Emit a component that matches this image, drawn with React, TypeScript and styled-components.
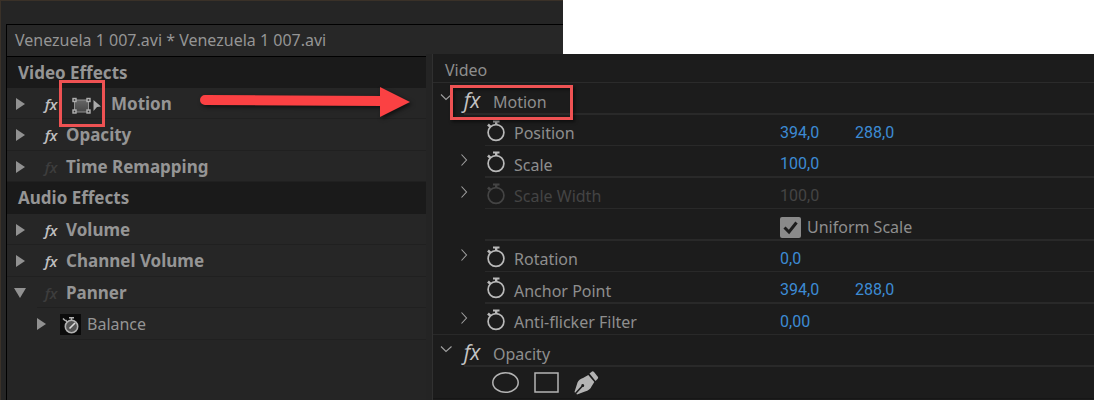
import React from "react";
import styled, { createGlobalStyle } from "styled-components";

const GlobalStyle = createGlobalStyle`
  *, *::before, *::after { box-sizing: border-box; }
  body {
    margin: 0;
    background: #fff;
    font-family: "Noto Sans", "Open Sans", sans-serif;
    font-size: 16px;
    line-height: 24px;
  }
  button, input {
    margin: 0;
    padding: 0;
    border: 0;
    background: none;
    color: inherit;
    font: inherit;
  }
  h2, p { margin: 0; font: inherit; }
  svg { display: block; }
`;

const Stage = styled.main`
  position: relative;
  display: grid;
  grid-template-columns: 433px 130px minmax(0, 1fr);
  grid-template-rows: 54px 1fr;
  min-height: 100vh;
`;

/* Classic panel */

const ClassicWindow = styled.section`
  grid-column: 1 / 3;
  grid-row: 1 / 3;
  padding: 23px 0 0 5px;
  background: #252525;
  border-top: 1px solid #3a3128;
  border-left: 1px solid #3a3128;
`;

const ClassicPanel = styled.div`
  min-height: 100%;
  border-top: 1px solid #000;
  border-left: 1px solid #000;
  color: #959595;
`;

const ClipTitle = styled.p`
  height: 31px;
  padding: 3px 8px 0;
  background: #272727;
`;

const EffectList = styled.div`
  width: 419px;
  border-top: 1px solid #000;
`;

const ClassicHeader = styled.h2<{ $tall?: boolean }>`
  display: flex;
  align-items: center;
  height: ${(p) => (p.$tall ? 32 : 31)}px;
  padding-left: 11px;
  background: #1a1a1a;
  font-weight: 700;
  font-size: 17px;
`;

const ClassicRow = styled.div<{ $tall?: boolean; $nested?: boolean; $line?: number }>`
  display: flex;
  align-items: center;
  height: ${(p) => (p.$tall ? 32 : 31)}px;
  padding-left: ${(p) => (p.$nested ? 28 : 7)}px;
  font-weight: ${(p) => (p.$nested ? 400 : 700)};
  font-size: ${(p) => (p.$nested ? 16 : 17)}px;
  background: linear-gradient(#202020, #202020) ${(p) => p.$line ?? 0}px 100% / 100% 1px no-repeat #262626;
`;

const TriangleButton = styled.button`
  display: grid;
  place-items: center;
  width: 12px;
  height: 20px;
`;

const ClassicFx = styled.button<{ $off?: boolean }>`
  width: 18px;
  margin: 0 6px 0 16px;
  color: ${(p) => (p.$off ? "#3d3d3d" : "#c0c0c0")};
  font: italic 600 15px/20px "Open Sans", sans-serif;
  text-align: center;
`;

const TransformButton = styled.button`
  position: relative;
  width: 30px;
  height: 22px;
  margin: 0 9px 0 6px;
  padding-top: 4px;
`;

const ClassicWatch = styled.button`
  width: 21px;
  height: 21px;
  margin: 0 6px 0 13px;
  background: #0b0b0b;
`;

/* Current panel */

const ModernPanel = styled.section`
  grid-column: 2 / 4;
  grid-row: 2;
  margin-left: -7px;
  border-left: 6px solid #242424;
  background: #1c1c1c;
  color: #8e8e8e;
`;

const ModernBody = styled.div`
  min-height: 100%;
  border-left: 1px solid #303030;
`;

const ModernHeader = styled.h2`
  height: 29px;
  padding: 4px 12px 0;
  border-bottom: 1px solid #2b2b2b;
`;

const Row = styled.div<{ $tall?: boolean; $line?: number }>`
  display: grid;
  grid-template-columns: 347px minmax(0, 1fr);
  height: ${(p) => (p.$tall ? 32 : 31)}px;
  background: linear-gradient(#292929, #292929) ${(p) => p.$line ?? 0}px 100% / 100% ${(p) => (p.$tall ? 2 : 1)}px no-repeat;
`;

const NameCell = styled.div<{ $nested?: boolean; $muted?: boolean }>`
  display: flex;
  align-items: center;
  padding: 2px 0 0 ${(p) => (p.$nested ? 25 : 6)}px;
  color: ${(p) => (p.$muted ? "#444" : "inherit")};
`;

const ValueCell = styled.div`
  display: flex;
  align-items: center;
  padding-top: 4px;
`;

const Chevron = styled.button`
  width: 14px;
  height: 20px;
  padding-bottom: 6px;
`;

const ChevronGap = styled.span`
  width: 14px;
`;

const FxButton = styled.button`
  width: 22px;
  margin: 0 10px 0 8px;
  color: #c4c4c4;
  font: italic 400 21px/24px "Open Sans", sans-serif;
  text-align: center;
`;

const WatchButton = styled.button<{ $muted?: boolean }>`
  width: 20px;
  height: 24px;
  margin: 0 8px 0 14px;
  padding-bottom: 4px;
  color: ${(p) => (p.$muted ? "#444" : "#b9b9b9")};
`;

const Name = styled.span`
  padding-top: 3px;
`;

const ValueInput = styled.input`
  width: 75px;
  height: 22px;
  color: #3d8bd4;
  font-family: Roboto, "Noto Sans", sans-serif;
  &:disabled { color: #444; }
`;

const CheckLabel = styled.label`
  display: flex;
  align-items: center;
  gap: 6px;
`;

const CheckStack = styled.span`
  display: grid;
  > * { grid-area: 1 / 1; }
  svg { pointer-events: none; }
`;

const CheckInput = styled.input`
  appearance: none;
  width: 21px;
  height: 21px;
  border-radius: 2px;
  background: #8a8a8a;
`;

const MaskTools = styled.div`
  display: flex;
  align-items: center;
  gap: 14px;
  height: 32px;
  padding-left: 59px;
  border-bottom: 1px solid #161616;
  color: #b4b4b4;
`;

const MaskButton = styled.button`
  width: 27px;
  height: 26px;
`;

/* Annotations drawn over the panels */

const IconMarker = styled.span`
  position: absolute;
  left: -13px;
  top: -13px;
  width: 46px;
  height: 47px;
  border: 3px solid #ee5253;
  pointer-events: none;
`;

const HeadingMarker = styled.span`
  position: absolute;
  left: 450px;
  top: 85px;
  width: 123px;
  height: 35px;
  border: 3px solid #ee5253;
  box-shadow: 2px 2px 3px rgba(0, 0, 0, 0.5), inset 2px 2px 3px rgba(0, 0, 0, 0.4);
  pointer-events: none;
`;

const Arrow = styled.svg`
  position: absolute;
  left: 196px;
  top: 82px;
  pointer-events: none;
  filter: drop-shadow(2px 2px 2px rgba(0, 0, 0, 0.6));
`;

function Triangle({ label, open }: { label: string; open?: boolean }) {
  return (
    <TriangleButton type="button" aria-label={`Toggle ${label}`} aria-expanded={!!open}>
      <svg width="12" height="12" fill="#919191">
        <path d={open ? "M0 1H12L6 11Z" : "M2 0L11 6L2 12Z"} />
      </svg>
    </TriangleButton>
  );
}

function TransformIcon() {
  return (
    <svg width="30" height="18" viewBox="0 0 30 18">
      <defs>
        <linearGradient id="box" x1="0" y1="0" x2="0" y2="1">
          <stop offset="0" stopColor="#666" />
          <stop offset="1" stopColor="#484848" />
        </linearGradient>
      </defs>
      <rect x="2.500" y="3" width="14" height="12" fill="url(#box)" stroke="#929292" />
      <g fill="#333" stroke="#b0b0b0" strokeWidth="1.400">
        <rect x="1" y="1.500" width="3" height="3" />
        <rect x="15" y="1.500" width="3" height="3" />
        <rect x="1" y="13" width="3" height="3" />
        <rect x="15" y="13" width="3" height="3" />
      </g>
      <path d="M21.500 3L29 9.500L25 10L21.500 14Z" fill="#aaa" />
    </svg>
  );
}

function ClassicWatchIcon() {
  return (
    <svg width="21" height="21" viewBox="0 0 21 21" fill="none" stroke="#b2b2b2">
      <circle cx="11.500" cy="12.500" r="6.200" fill="#555" strokeWidth="1.600" />
      <path d="M9 3.700H14M11.500 4V6M3 4.500L5 6.500M5.500 6L7 8" strokeWidth="1.500" />
      <path d="M9.500 14.500L15 9" stroke="#ddd" strokeWidth="1.600" />
    </svg>
  );
}

function WatchIcon() {
  return (
    <svg width="20" height="22" viewBox="0 0 20 22" fill="none" stroke="currentColor">
      <circle cx="10" cy="12.500" r="7.900" strokeWidth="1.700" />
      <path d="M7 1.500H13.500" strokeWidth="2" />
      <path d="M10.200 1.500V5" strokeWidth="2.400" />
      <path d="M2 4.500L4.200 6.700" strokeWidth="2.600" />
    </svg>
  );
}

function ChevronButton({ label, open }: { label: string; open?: boolean }) {
  return (
    <Chevron type="button" aria-label={`Toggle ${label}`} aria-expanded={!!open}>
      <svg width="14" height="14" fill="none" stroke="#a0a0a0" strokeWidth="1.100">
        <path d={open ? "M2 4.500L7 9.500L12.500 4.500" : "M3.500 1.500L8.500 7L3.500 12.500"} />
      </svg>
    </Chevron>
  );
}

function ClassicEffect({ label, tall, off, open, transform, line }: {
  label: string; tall?: boolean; off?: boolean; open?: boolean; transform?: boolean; line?: number;
}) {
  return (
    <ClassicRow $tall={tall} $line={line}>
      <Triangle label={label} open={open} />
      <ClassicFx type="button" $off={off} aria-label={`Enable ${label}`}>fx</ClassicFx>
      {transform && (
        <TransformButton type="button" aria-label="Transform">
          <TransformIcon />
          <IconMarker />
        </TransformButton>
      )}
      <span>{label}</span>
    </ClassicRow>
  );
}

function Property({ label, values, tall, expandable, muted, line = 52 }: {
  label: string; values: string[]; tall?: boolean; expandable?: boolean; muted?: boolean; line?: number;
}) {
  return (
    <Row $tall={tall} $line={line}>
      <NameCell $nested $muted={muted}>
        {expandable ? <ChevronButton label={label} /> : <ChevronGap />}
        <WatchButton type="button" $muted={muted} aria-label={`Animate ${label}`}>
          <WatchIcon />
        </WatchButton>
        <Name>{label}</Name>
      </NameCell>
      <ValueCell>
        {values.map((value, i) => (
          <ValueInput key={i} type="text" defaultValue={value} disabled={muted} aria-label={`${label} ${i + 1}`} />
        ))}
      </ValueCell>
    </Row>
  );
}

function EffectHeading({ label }: { label: string }) {
  return (
    <Row $tall $line={31}>
      <NameCell>
        <ChevronButton label={label} open />
        <FxButton type="button" aria-label={`Enable ${label}`}>fx</FxButton>
        <Name>{label}</Name>
      </NameCell>
    </Row>
  );
}

export default function App() {
  return (
    <>
      <GlobalStyle />
      <Stage>
        <ClassicWindow>
          <ClassicPanel>
            <ClipTitle>Venezuela 1 007.avi * Venezuela 1 007.avi</ClipTitle>
            <EffectList>
              <ClassicHeader>Video Effects</ClassicHeader>
              <ClassicEffect label="Motion" transform />
              <ClassicEffect label="Opacity" tall />
              <ClassicEffect label="Time Remapping" off />
              <ClassicHeader $tall>Audio Effects</ClassicHeader>
              <ClassicEffect label="Volume" />
              <ClassicEffect label="Channel Volume" tall />
              <ClassicEffect label="Panner" off open line={30} />
              <ClassicRow $tall $nested $line={53}>
                <Triangle label="Balance" />
                <ClassicWatch type="button" aria-label="Animate Balance">
                  <ClassicWatchIcon />
                </ClassicWatch>
                <span>Balance</span>
              </ClassicRow>
            </EffectList>
          </ClassicPanel>
        </ClassicWindow>

        <ModernPanel>
          <ModernBody>
            <ModernHeader>Video</ModernHeader>
            <EffectHeading label="Motion" />
            <Property label="Position" values={["394,0", "288,0"]} />
            <Property label="Scale" values={["100,0"]} tall expandable />
            <Property label="Scale Width" values={["100,0"]} expandable muted />
            <Row $tall $line={52}>
              <span />
              <ValueCell>
                <CheckLabel>
                  <CheckStack>
                    <CheckInput type="checkbox" defaultChecked />
                    <svg width="21" height="21" fill="none" stroke="#1c1c1c" strokeWidth="3">
                      <path d="M4.500 10.500L9 15L16.500 5.500" />
                    </svg>
                  </CheckStack>
                  <span>Uniform Scale</span>
                </CheckLabel>
              </ValueCell>
            </Row>
            <Property label="Rotation" values={["0,0"]} expandable />
            <Property label="Anchor Point" values={["394,0", "288,0"]} tall />
            <Property label="Anti-flicker Filter" values={["0,00"]} expandable line={0} />
            <EffectHeading label="Opacity" />
            <MaskTools>
              <MaskButton type="button" aria-label="Ellipse mask">
                <svg width="27" height="26" fill="none" stroke="currentColor" strokeWidth="1.500">
                  <ellipse cx="13.500" cy="12.500" rx="12.700" ry="9.800" />
                </svg>
              </MaskButton>
              <MaskButton type="button" aria-label="Rectangle mask">
                <svg width="27" height="26" fill="none" stroke="currentColor" strokeWidth="1.500">
                  <rect x="2" y="3" width="23" height="19" />
                </svg>
              </MaskButton>
              <MaskButton type="button" aria-label="Pen mask">
                <svg width="27" height="26" fill="currentColor">
                  <path d="M15.500 3.500L18 1.500Q19 1 20 2L24 7Q24.500 8 23.500 9L21.500 11Z" />
                  <path d="M14.300 5L20.300 12L17.500 16.500Q16 20 11 21.500L3 24.500L2.300 23.800L8.500 17A1.500 1.500 0 1 0 7.300 16L1.100 22.800L0.500 22L3.500 12.500Q5 9 9 8Z" />
                </svg>
              </MaskButton>
            </MaskTools>
          </ModernBody>
        </ModernPanel>

        <HeadingMarker />
        <Arrow width="220" height="42" aria-hidden="true">
          <path d="M9 18L186 19" stroke="#fb4143" strokeWidth="10" strokeLinecap="round" />
          <path d="M184 5L214 20L184 35Z" fill="#fb4143" />
        </Arrow>
      </Stage>
    </>
  );
}
